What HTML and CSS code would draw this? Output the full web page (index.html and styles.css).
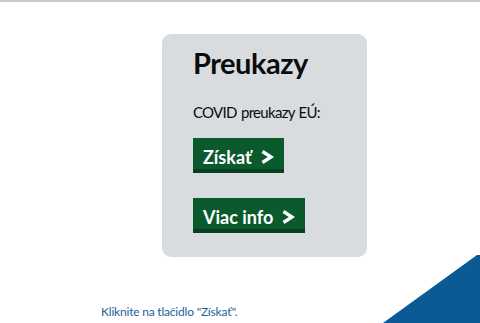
FILE: index.html
```html
<!DOCTYPE html>
<html lang="sk">
<head>
<meta charset="utf-8">
<link rel="stylesheet" href="styles.css">
</head>
<body>
<div class="topline"></div>
<main class="main">
  <section class="card">
    <h1 class="title">Preukazy</h1>
    <p class="lead">COVID preukazy EÚ:</p>
    <div class="actions">
      <a class="btn" href="#">Získať<svg class="chev" viewBox="0 0 14 14" width="14" height="14"><polyline points="2.5,1.5 11,7 2.5,12.5" fill="none" stroke="#fff" stroke-width="3.4" stroke-linejoin="miter"/></svg></a>
      <a class="btn" href="#">Viac info<svg class="chev" viewBox="0 0 14 14" width="14" height="14"><polyline points="2.5,1.5 11,7 2.5,12.5" fill="none" stroke="#fff" stroke-width="3.4" stroke-linejoin="miter"/></svg></a>
    </div>
  </section>
  <p class="hint">Kliknite na tlačidlo "Získať".</p>
</main>
<svg class="corner" viewBox="0 0 97 68" width="97" height="68"><polygon points="0,68 94,0 97,0 97,68" fill="#0b5a95"/></svg>
</body>
</html>
```
FILE: styles.css
```css
html, body {
  margin: 0;
  padding: 0;
  background: #fff;
  width: 480px;
  height: 323px;
  overflow: hidden;
  font-family: Lato, "Liberation Sans", sans-serif;
}
.topline {
  height: 2px;
  background: #c3cad1;
}
.main {
  padding: 32px 0 0 0;
}
.card {
  margin-left: 162px;
  width: 205px;
  box-sizing: border-box;
  padding: 11px 0 24px 31px;
  background: #d9dcdf;
  border-radius: 9px;
  color: #0b0c0c;
}
.title {
  margin: 0;
  font-size: 29px;
  line-height: 36px;
  font-weight: 700;
  letter-spacing: -0.5px;
}
.lead {
  margin: 22px 0 0 0;
  font-size: 15px;
  line-height: 19px;
  letter-spacing: -0.7px;
  word-spacing: 1px;
}
.actions {
  margin-top: 16px;
  display: flex;
  flex-direction: column;
  align-items: flex-start;
  gap: 25px;
}
.btn {
  display: inline-flex;
  align-items: center;
  gap: 8px;
  box-sizing: border-box;
  height: 35px;
  padding: 6px 10px 0 10px;
  background: #0a5a2e;
  border-bottom: 4px solid #073f20;
  color: #fff;
  text-decoration: none;
  font-size: 18px;
  line-height: 20px;
  font-weight: 700;
}
.chev {
  display: block;
}
.hint {
  margin: 47px 0 0 101px;
  font-size: 12px;
  line-height: 15px;
  letter-spacing: -0.2px;
  color: #1d5f9c;
}
.corner {
  position: absolute;
  right: 0;
  bottom: 0;
  display: block;
}
```
